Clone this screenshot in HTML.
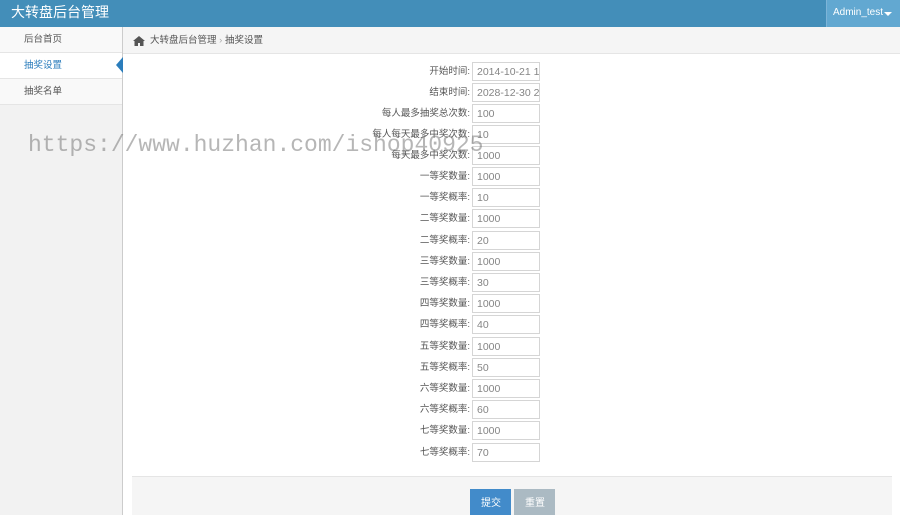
<!DOCTYPE html>
<html><head><meta charset="utf-8"><style>
*{margin:0;padding:0;box-sizing:border-box}
body{width:900px;height:515px;overflow:hidden;background:#fff;font-family:"Liberation Sans","Noto Sans CJK SC",sans-serif;font-size:10px;line-height:12px;color:#393939;position:relative}
.hd{position:absolute;left:0;top:0;width:900px;height:27px;background:#438eb9}
.hd .t{position:absolute;left:11px;top:4px;color:#fff;font-size:14px;line-height:17px}
.hd .u{position:absolute;left:826px;top:0;width:74px;height:27px;background:#62a8d1;border-left:1px solid #7db4d8;color:#fff;font-size:10px;padding:7px 0 0 6px}
.hd .u:after{content:"";position:absolute;right:8px;top:12px;border:4px solid transparent;border-top-color:#fff}
.sb{position:absolute;left:0;top:27px;width:123px;height:488px;background:#f2f2f2;border-right:1px solid #ccc}
.sb div{height:26px;border-bottom:1px solid #e5e5e5;padding:7px 0 0 24px;color:#585858;background:#f9f9f9;font-size:9.5px}
.sb div.a{background:#fff;color:#2b7dbc;position:relative}
.sb div.a:after{content:"";position:absolute;right:-1px;top:4px;border:8px solid transparent;border-right:7px solid #2b7dbc;border-left:none}
.bc{position:absolute;left:123px;top:27px;width:777px;height:27px;background:#f5f5f5;border-bottom:1px solid #e5e5e5;padding:8px 0 0 27px;color:#555;font-size:9.5px}
.bc svg{position:absolute;left:10px;top:9px}
.row{position:absolute;left:300px;width:242px;height:20px}
.row span{position:absolute;right:72px;top:4px;white-space:nowrap;color:#555;font-size:9.5px}
.row i{position:absolute;left:172px;top:0;width:68px;height:19px;border:1px solid #d5d5d5;font-style:normal;color:#858585;font-size:10.5px;line-height:13px;padding:3px 0 0 4px;overflow:hidden;white-space:nowrap}
.fa{position:absolute;left:132px;top:476px;width:760px;height:39px;background:#f5f5f5;border-top:1px solid #e5e5e5}
.b{position:absolute;top:489px;width:41px;height:26px;color:#fff;padding:9px 0 0 11px}
.wm{position:absolute;left:28px;top:130px;font-family:"Liberation Mono",monospace;font-size:23px;line-height:30px;color:rgba(110,110,110,.5);white-space:nowrap}
</style></head><body>
<div class="hd"><div class="t">大转盘后台管理</div><div class="u">Admin_test</div></div>
<div class="sb"><div>后台首页</div><div class="a">抽奖设置</div><div>抽奖名单</div></div>
<div class="bc"><svg width="12" height="10" viewBox="0 0 12 10"><path d="M6 0L0 5h1.5v5h3.5V7h2v3h3.5V5H12z" fill="#555"/></svg>大转盘后台管理 <span style="color:#aaa">›</span> 抽奖设置</div>
<div class="row" style="top:62px"><span>开始时间:</span><i>2014-10-21 10</i></div>
<div class="row" style="top:83px"><span>结束时间:</span><i>2028-12-30 23</i></div>
<div class="row" style="top:104px"><span>每人最多抽奖总次数:</span><i>100</i></div>
<div class="row" style="top:125px"><span>每人每天最多中奖次数:</span><i>10</i></div>
<div class="row" style="top:146px"><span>每天最多中奖次数:</span><i>1000</i></div>
<div class="row" style="top:167px"><span>一等奖数量:</span><i>1000</i></div>
<div class="row" style="top:188px"><span>一等奖概率:</span><i>10</i></div>
<div class="row" style="top:209px"><span>二等奖数量:</span><i>1000</i></div>
<div class="row" style="top:231px"><span>二等奖概率:</span><i>20</i></div>
<div class="row" style="top:252px"><span>三等奖数量:</span><i>1000</i></div>
<div class="row" style="top:273px"><span>三等奖概率:</span><i>30</i></div>
<div class="row" style="top:294px"><span>四等奖数量:</span><i>1000</i></div>
<div class="row" style="top:315px"><span>四等奖概率:</span><i>40</i></div>
<div class="row" style="top:337px"><span>五等奖数量:</span><i>1000</i></div>
<div class="row" style="top:358px"><span>五等奖概率:</span><i>50</i></div>
<div class="row" style="top:379px"><span>六等奖数量:</span><i>1000</i></div>
<div class="row" style="top:400px"><span>六等奖概率:</span><i>60</i></div>
<div class="row" style="top:421px"><span>七等奖数量:</span><i>1000</i></div>
<div class="row" style="top:443px"><span>七等奖概率:</span><i>70</i></div>
<div class="fa"></div>
<div class="b" style="left:470px;background:#428bca">提交</div>
<div class="b" style="left:514px;background:#abbac3">重置</div>
<div class="wm">https://www.huzhan.com/ishop40925</div>
</body></html>
